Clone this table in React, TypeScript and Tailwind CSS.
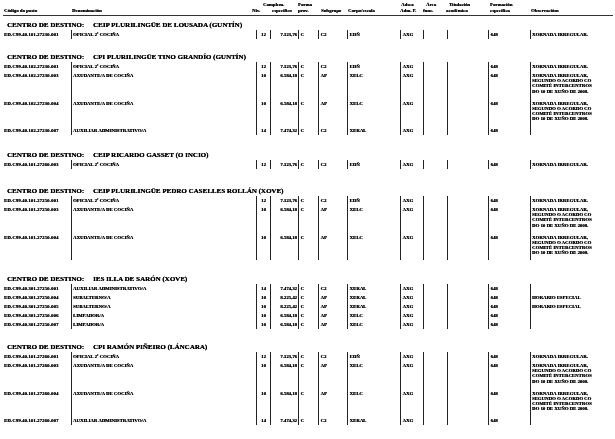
type Post = {
  code: string;
  den: string;
  niv: string;
  comp: string;
  sub: string;
  corpo: string;
  obs: string[];
  tall?: boolean;
};

type Centre = {
  name: string;
  gap: string;
  rows: Post[];
};

const ACORDO = [
  "XORNADA IRREGULAR,",
  "SEGUNDO O ACORDO CO",
  "COMITÉ INTERCENTROS",
  "DO 10 DE XUÑO DE 2008.",
];

const oficial = (code: string): Post => ({
  code,
  den: "OFICIAL 2ª COCIÑA",
  niv: "12",
  comp: "7.123,76",
  sub: "C2",
  corpo: "EDÑ",
  obs: ["XORNADA IRREGULAR."],
});

const axudante = (code: string): Post => ({
  code,
  den: "AXUDANTE/A DE COCIÑA",
  niv: "10",
  comp: "6.584,18",
  sub: "AP",
  corpo: "XELC",
  obs: ACORDO,
  tall: true,
});

const auxiliar = (code: string): Post => ({
  code,
  den: "AUXILIAR ADMINISTRATIVO/A",
  niv: "14",
  comp: "7.474,32",
  sub: "C2",
  corpo: "XERAL",
  obs: [],
});

const centres: Centre[] = [
  {
    name: "CEIP PLURILINGÜE DE LOUSADA (GUNTÍN)",
    gap: "mt-[4.5px]",
    rows: [oficial("ED.C99.40.101.27230.001")],
  },
  {
    name: "CPI PLURILINGÜE TINO GRANDÍO (GUNTÍN)",
    gap: "mt-[13px]",
    rows: [
      oficial("ED.C99.40.102.27230.001"),
      axudante("ED.C99.40.102.27230.003"),
      axudante("ED.C99.40.102.27230.004"),
      auxiliar("ED.C99.40.102.27230.007"),
    ],
  },
  {
    name: "CEIP RICARDO GASSET (O INCIO)",
    gap: "mt-[15px]",
    rows: [oficial("ED.C99.40.101.27260.003")],
  },
  {
    name: "CEIP PLURILINGÜE PEDRO CASELLES ROLLÁN (XOVE)",
    gap: "mt-[17px]",
    rows: [
      oficial("ED.C99.40.101.27250.001"),
      axudante("ED.C99.40.101.27250.003"),
      axudante("ED.C99.40.101.27250.004"),
    ],
  },
  {
    name: "IES ILLA DE SARÓN (XOVE)",
    gap: "mt-[14px]",
    rows: [
      auxiliar("ED.C99.40.301.27250.001"),
      {
        code: "ED.C99.40.301.27250.004",
        den: "SUBALTERNO/A",
        niv: "10",
        comp: "8.225,42",
        sub: "AP",
        corpo: "XERAL",
        obs: ["HORARIO ESPECIAL"],
      },
      {
        code: "ED.C99.40.301.27250.005",
        den: "SUBALTERNO/A",
        niv: "10",
        comp: "8.225,42",
        sub: "AP",
        corpo: "XERAL",
        obs: ["HORARIO ESPECIAL"],
      },
      {
        code: "ED.C99.40.301.27250.006",
        den: "LIMPADOR/A",
        niv: "10",
        comp: "6.584,18",
        sub: "AP",
        corpo: "XELC",
        obs: [],
      },
      {
        code: "ED.C99.40.301.27250.007",
        den: "LIMPADOR/A",
        niv: "10",
        comp: "6.584,18",
        sub: "AP",
        corpo: "XELC",
        obs: [],
      },
    ],
  },
  {
    name: "CPI RAMÓN PIÑEIRO (LÁNCARA)",
    gap: "mt-[13px]",
    rows: [
      oficial("ED.C99.40.101.27260.001"),
      axudante("ED.C99.40.101.27260.003"),
      axudante("ED.C99.40.101.27260.004"),
      auxiliar("ED.C99.40.101.27260.007"),
    ],
  },
];

// header: [first line, second line, indent of first line, indent of second line]
const headerCells: [string, string, string, string][] = [
  ["", "Código do posto", "", ""],
  ["", "Denominación", "", ""],
  ["", "Niv.", "", ""],
  ["Complem.", "específico", "pl-[1px]", "pl-[10px]"],
  ["Forma", "prov.", "", ""],
  ["", "Subgrupo", "", ""],
  ["", "Corpo/escala", "", ""],
  ["Adscr.", "Adm. P.", "pl-[1px]", ""],
  ["Área", "func.", "pl-[3px]", ""],
  ["Titulación", "académica", "pl-[3px]", ""],
  ["Formación", "específica", "", ""],
  ["", "Observacións", "", ""],
];

function Header() {
  return (
    <div className="ml-[3px] mr-[2px] border-b border-[#333] pt-[1.5px] pl-[1px]">
      <div className="grid grid-cols-[68px_180px_10px_36px_23px_27px_52px_23px_23px_44px_41px_1fr]">
        {headerCells.map(([a, b, pa, pb], i) => (
          <div key={i} className="text-[4.8px] leading-[6.5px] whitespace-nowrap">
            <div className={`h-[6.5px] ${pa}`}>{a}</div>
            <div className={`h-[6.5px] ${pb}`}>{b}</div>
          </div>
        ))}
      </div>
    </div>
  );
}

function Cell({
  children,
  bar = true,
  className = "",
}: {
  children?: React.ReactNode;
  bar?: boolean;
  className?: string;
}) {
  return (
    <div
      className={`pt-[2px] text-[4.8px] leading-[5.2px] whitespace-nowrap ${
        bar ? "border-l border-[#222]" : ""
      } ${className}`}
    >
      {children}
    </div>
  );
}

function PostRow({ p }: { p: Post }) {
  const h = p.tall ? "h-[27.5px]" : "h-[9px]";
  return (
    <>
      <Cell bar={false} className={`${h} pl-[4px] tracking-[0.1px]`}>
        {p.code}
      </Cell>
      <Cell className={`${h} pl-[1px]`}>{p.den}</Cell>
      <Cell className={`${h} text-center`}>{p.niv}</Cell>
      <Cell className={`${h} text-right pr-[1px]`}>{p.comp}</Cell>
      <Cell className={`${h} pl-[1.5px]`}>C</Cell>
      <Cell className={`${h} pl-[1.5px]`}>{p.sub}</Cell>
      <Cell className={`${h} pl-[1.5px]`}>{p.corpo}</Cell>
      <Cell className={`${h} pl-[1.5px]`}>AXG</Cell>
      <Cell className={h} />
      <Cell className={h} />
      <Cell className={`${h} pl-[1.5px]`}>648</Cell>
      <Cell className={`${h} pl-[1px]`}>
        {p.obs.map((line) => (
          <div key={line}>{line}</div>
        ))}
      </Cell>
    </>
  );
}

function CentreBlock({ c }: { c: Centre }) {
  return (
    <section className={c.gap}>
      <div className="flex h-[10px] items-center text-[7px] leading-[10px] whitespace-nowrap">
        <span className="w-[93px] pl-[7px]">CENTRO DE DESTINO:</span>
        <span>{c.name}</span>
      </div>
      <div className="grid grid-cols-[71px_185px_14px_28px_20px_29px_53px_23px_24px_41px_42px_1fr]">
        {c.rows.map((p) => (
          <PostRow key={p.code} p={p} />
        ))}
      </div>
    </section>
  );
}

export default function App() {
  return (
    <div className="w-[615px] h-[439px] overflow-hidden bg-white text-black font-bold will-change-transform [font-family:'Liberation_Serif',serif] [text-shadow:0.25px_0_0_#000]">
      <Header />
      {centres.map((c) => (
        <CentreBlock key={c.name} c={c} />
      ))}
    </div>
  );
}
